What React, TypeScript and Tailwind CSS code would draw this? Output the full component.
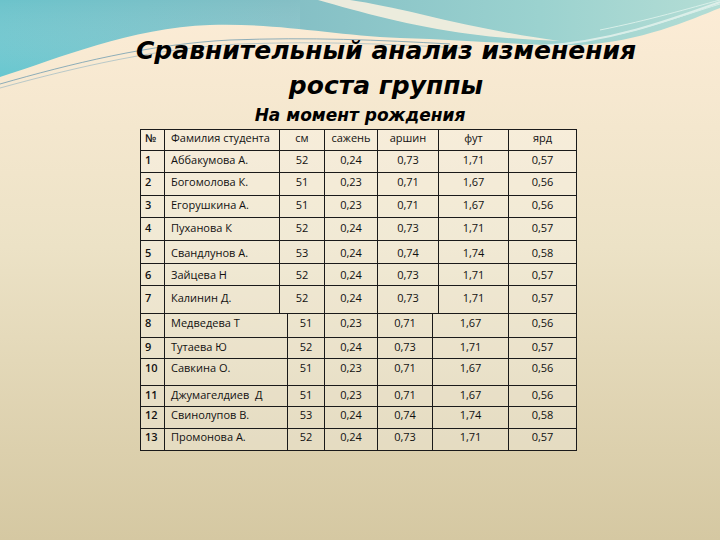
import React from "react";

type Row = { cells: string[]; h: string; pt: string };

const topWidths = ["w-[25px]", "w-[115px]", "w-[45px]", "w-[53px]", "w-[61px]", "w-[70px]", "w-[68px]"];
const botWidths = ["w-[25px]", "w-[123px]", "w-[37px]", "w-[53px]", "w-[55px]", "w-[76px]", "w-[68px]"];

const topRows: Row[] = [
  { cells: ["№", "Фамилия студента", "см", "сажень", "аршин", "фут", "ярд"], h: "h-[22px]", pt: "pt-[1px]" },
  { cells: ["1", "Аббакумова А.", "52", "0,24", "0,73", "1,71", "0,57"], h: "h-[22px]", pt: "pt-[2px]" },
  { cells: ["2", "Богомолова К.", "51", "0,23", "0,71", "1,67", "0,56"], h: "h-[23px]", pt: "pt-[2px]" },
  { cells: ["3", "Егорушкина А.", "51", "0,23", "0,71", "1,67", "0,56"], h: "h-[22px]", pt: "pt-[2px]" },
  { cells: ["4", "Пуханова К", "52", "0,24", "0,73", "1,71", "0,57"], h: "h-[23px]", pt: "pt-[3px]" },
  { cells: ["5", "Свандлунов А.", "53", "0,24", "0,74", "1,74", "0,58"], h: "h-[23px]", pt: "pt-[5px]" },
  { cells: ["6", "Зайцева Н", "52", "0,24", "0,73", "1,71", "0,57"], h: "h-[22px]", pt: "pt-[4px]" },
  { cells: ["7", "Калинин Д.", "52", "0,24", "0,73", "1,71", "0,57"], h: "h-[28px]", pt: "pt-[5px]" },
];

const botRows: Row[] = [
  { cells: ["8", "Медведева Т", "51", "0,23", "0,71", "1,67", "0,56"], h: "h-[24px]", pt: "pt-[2px]" },
  { cells: ["9", "Тутаева Ю", "52", "0,24", "0,73", "1,71", "0,57"], h: "h-[21px]", pt: "pt-[2px]" },
  { cells: ["10", "Савкина О.", "51", "0,23", "0,71", "1,67", "0,56"], h: "h-[27px]", pt: "pt-[2px]" },
  { cells: ["11", "Джумагелдиев  Д", "51", "0,23", "0,71", "1,67", "0,56"], h: "h-[21px]", pt: "pt-[2px]" },
  { cells: ["12", "Свинолупов В.", "53", "0,24", "0,74", "1,74", "0,58"], h: "h-[22px]", pt: "pt-[1px]" },
  { cells: ["13", "Промонова А.", "52", "0,24", "0,73", "1,71", "0,57"], h: "h-[22px]", pt: "pt-[1px]" },
];

function TableRow({ row, widths, first }: { row: Row; widths: string[]; first?: boolean }) {
  return (
    <div className={`flex ${row.h} border-b border-[#1a1a1a] ${first ? "border-t" : ""}`}>
      {row.cells.map((c, i) => {
        const align =
          i === 0
            ? "pl-[4px] font-semibold"
            : i === 1
            ? "pl-[6px] font-medium"
            : "justify-center";
        return (
          <div
            key={i}
            className={`flex items-start ${widths[i]} ${row.pt} ${align} border-r border-[#1a1a1a] ${
              i === 0 ? "border-l" : ""
            } whitespace-pre leading-[14px]`}
          >
            {c}
          </div>
        );
      })}
    </div>
  );
}

function Background() {
  return (
    <svg className="absolute inset-0" width="720" height="540" viewBox="0 0 720 540">
      <defs>
        <linearGradient id="teal" x1="0" y1="0" x2="1" y2="0">
          <stop offset="0" stopColor="#6cc3cb" />
          <stop offset="0.4" stopColor="#84bfc5" />
          <stop offset="0.75" stopColor="#9bd2cf" />
          <stop offset="1" stopColor="#b4ddd5" />
        </linearGradient>
        <linearGradient id="tealv" x1="0" y1="0" x2="0" y2="1">
          <stop offset="0" stopColor="#ffffff" stopOpacity="0" />
          <stop offset="1" stopColor="#40c8d4" stopOpacity="0.35" />
        </linearGradient>
        <linearGradient id="cream" x1="0" y1="0" x2="0" y2="1">
          <stop offset="0" stopColor="#fcecd6" />
          <stop offset="0.45" stopColor="#ece2c6" />
          <stop offset="1" stopColor="#d5c8a2" />
        </linearGradient>
      </defs>
      <rect x="0" y="0" width="720" height="120" fill="url(#teal)" />
      <rect x="0" y="0" width="300" height="90" fill="url(#tealv)" />
      <path
        d="M0,77 C60,58 130,28 210,25 C280,23 330,35 400,38 C470,40 530,46 580,45 C640,42 690,20 720,8 L720,540 L0,540 Z"
        fill="url(#cream)"
      />
      <path
        d="M318,0 C360,12 410,26 470,34 C500,38 530,40 560,41 C520,36 470,26 420,14 C395,8 370,3 350,0 Z"
        fill="#f6f0df"
        opacity="0.9"
      />
      <path
        d="M540,46 C610,42 670,20 720,2"
        stroke="#e8f4ef"
        strokeWidth="2"
        fill="none"
        opacity="0.8"
      />
      <path d="M600,30 C650,20 690,8 720,0" stroke="#d8efe9" strokeWidth="1" fill="none" />
      <path d="M620,34 C660,24 700,10 720,4" stroke="#d8efe9" strokeWidth="1" fill="none" />
      <path
        d="M0,84 C70,64 150,44 230,40 C310,37 380,40 450,44"
        stroke="#5f93ad"
        strokeWidth="1"
        fill="none"
        opacity="0.7"
      />
      <path
        d="M0,88 C80,66 160,48 240,44 C320,41 390,44 460,48"
        stroke="#8fb3c2"
        strokeWidth="1"
        fill="none"
        opacity="0.6"
      />
    </svg>
  );
}

export default function App() {
  return (
    <div className="relative w-[720px] h-[540px] overflow-hidden bg-[#e9dfc3]">
      <Background />
      <div className="relative flex flex-col">
        <h1
          className="pt-[33px] pl-[52px] text-center text-[25px] leading-[35px] font-bold italic text-black"
          style={{ fontFamily: '"DejaVu Sans", sans-serif' }}
        >
          Сравнительный анализ изменения
          <br />
          роста группы
        </h1>
        <p
          className="mt-[2px] text-center text-[17px] leading-[20px] font-bold italic text-black"
          style={{ fontFamily: '"DejaVu Sans", sans-serif' }}
        >
          На момент рождения
        </p>
        <div
          className="mt-[4px] ml-[140px] w-[437px] flex flex-col bg-white/25 text-[11px] text-[#111]"
          style={{ fontFamily: '"Open Sans", "Liberation Sans", sans-serif' }}
        >
          {topRows.map((r, i) => (
            <TableRow key={i} row={r} widths={topWidths} first={i === 0} />
          ))}
          {botRows.map((r, i) => (
            <TableRow key={i} row={r} widths={botWidths} />
          ))}
        </div>
      </div>
    </div>
  );
}
